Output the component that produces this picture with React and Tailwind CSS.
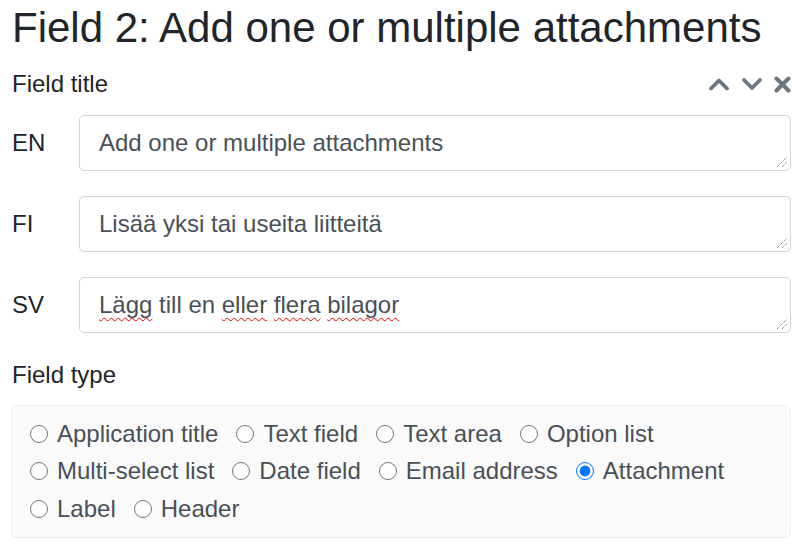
import React from 'react';

const langs = [
  { code: 'EN', text: 'Add one or multiple attachments', spell: false },
  { code: 'FI', text: 'Lisää yksi tai useita liitteitä', spell: false },
  { code: 'SV', text: 'Lägg till en eller flera bilagor', spell: true },
];

const types = [
  ['Application title', 'Text field', 'Text area', 'Option list'],
  ['Multi-select list', 'Date field', 'Email address', 'Attachment'],
  ['Label', 'Header'],
];

const Squiggle = ({ children }) => (
  <span className="underline decoration-wavy decoration-[#e00] decoration-1 underline-offset-[4px] [text-decoration-skip-ink:none]">{children}</span>
);

const SvText = () => (
  <span>
    <Squiggle>Lägg</Squiggle> till en <Squiggle>eller</Squiggle> <Squiggle>flera</Squiggle> <Squiggle>bilagor</Squiggle>
  </span>
);

export default function App() {
  return (
    <div className="w-[802px] h-[560px] bg-white px-[11px] text-[24px] leading-[36px] text-[#212529] overflow-hidden" style={{ fontFamily: '"Liberation Sans", Arial, sans-serif' }}>
      <h3 className="text-[42px] leading-[50px] pt-[3px] mb-[13px] pl-[1px]">Field 2: Add one or multiple attachments</h3>

      <div className="flex items-center justify-between h-[36px]">
        <span className="pl-[1px]">Field title</span>
        <div className="flex items-center gap-[11px] text-[#6c757d]">
          <svg width="22" height="14" viewBox="0 0 22 14" fill="none" stroke="currentColor" strokeWidth="3.8" strokeLinecap="round" strokeLinejoin="round"><path d="M3 11.5L11 3.5l8 8" /></svg>
          <svg width="22" height="14" viewBox="0 0 22 14" fill="none" stroke="currentColor" strokeWidth="3.8" strokeLinecap="round" strokeLinejoin="round"><path d="M3 3l8 8 8-8" /></svg>
          <svg width="17" height="17" viewBox="0 0 17 17" fill="none" stroke="currentColor" strokeWidth="4" strokeLinecap="round"><path d="M2.5 2.5l12 12M14.5 2.5l-12 12" /></svg>
        </div>
      </div>

      <div className="flex flex-col gap-[25px] mt-[13px]">
        {langs.map((l) => (
          <div key={l.code} className="flex items-center">
            <span className="w-[68px] pl-[1px]">{l.code}</span>
            <div className="relative flex-1 h-[56px] border border-[#ced4da] rounded-[5px] bg-white flex items-center pl-[19px] text-[#495057]">
              {l.spell ? <SvText /> : l.text}
              <svg className="absolute right-[3px] bottom-[3px]" width="11" height="11" viewBox="0 0 11 11" stroke="#666" strokeWidth="1" strokeDasharray="1 1"><path d="M1 11L11 1M6 11L11 6" /></svg>
            </div>
          </div>
        ))}
      </div>

      <div className="mt-[24px] h-[36px] flex items-center pl-[1px]">Field type</div>

      <div className="mt-[12px] border border-[#f0f0f0] rounded-[5px] bg-[#fafafa] pl-[18px] pt-[9px] pb-[9px] text-[#495057]">
        {types.map((row, i) => (
          <div key={i} className="flex items-center h-[37.5px]">
            {row.map((t) => (
              <label key={t} className="flex items-center mr-[18px]">
                <input type="radio" name="ftype" defaultChecked={t === 'Attachment'} className="m-0 w-[18px] h-[18px] mr-[9px] accent-[#0075ff]" />
                <span>{t}</span>
              </label>
            ))}
          </div>
        ))}
      </div>
    </div>
  );
}
